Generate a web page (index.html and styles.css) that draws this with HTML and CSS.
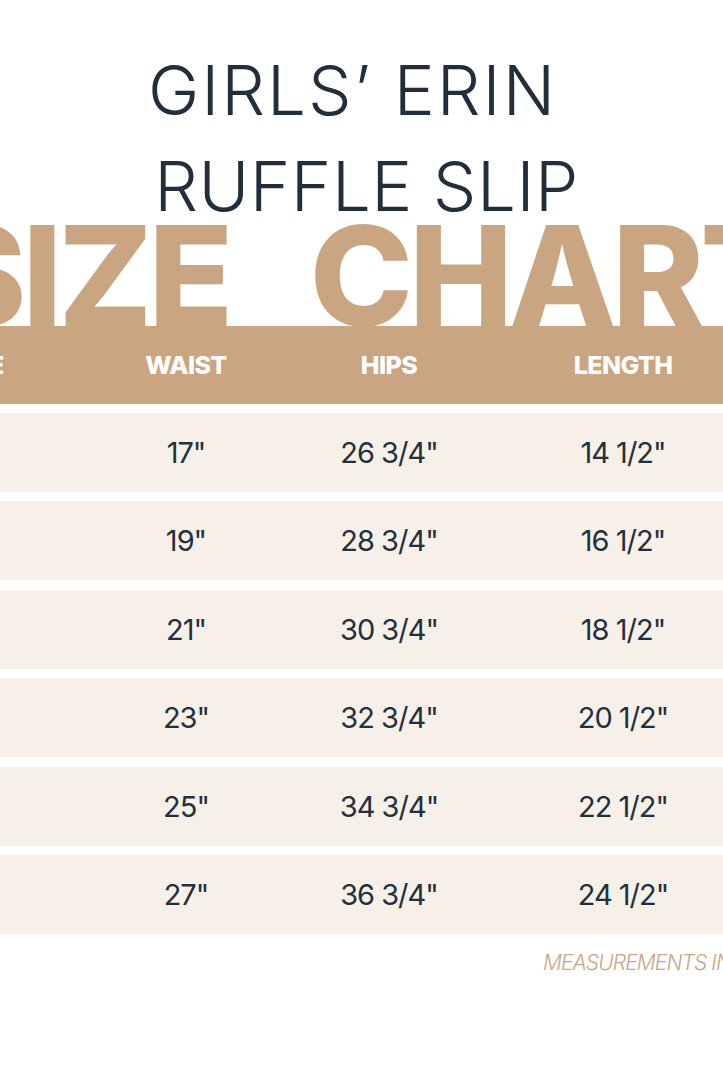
FILE: index.html
```html
<!DOCTYPE html>
<html lang="en">
<head>
<meta charset="utf-8">
<title>Girls' Erin Ruffle Slip – Size Chart</title>
<link rel="stylesheet" href="styles.css">
</head>
<body>
<main class="sheet">
  <h1 class="title">
    <span class="title-line title-line--first">GIRLS’ ERIN</span>
    <span class="title-line title-line--second">RUFFLE SLIP</span>
  </h1>
  <div class="banner">SIZE CHART</div>
  <div class="chart">
    <div class="row head">
      <div class="cell">SIZE</div>
      <div class="cell">WAIST</div>
      <div class="cell">HIPS</div>
      <div class="cell">LENGTH</div>
    </div>
    <div class="body">
      <div class="row"><div class="cell">2</div><div class="cell">17"</div><div class="cell">26 3/4"</div><div class="cell">14 1/2"</div></div>
      <div class="row"><div class="cell">4</div><div class="cell">19"</div><div class="cell">28 3/4"</div><div class="cell">16 1/2"</div></div>
      <div class="row"><div class="cell">6</div><div class="cell">21"</div><div class="cell">30 3/4"</div><div class="cell">18 1/2"</div></div>
      <div class="row"><div class="cell">8</div><div class="cell">23"</div><div class="cell">32 3/4"</div><div class="cell">20 1/2"</div></div>
      <div class="row"><div class="cell">10</div><div class="cell">25"</div><div class="cell">34 3/4"</div><div class="cell">22 1/2"</div></div>
      <div class="row"><div class="cell">12</div><div class="cell">27"</div><div class="cell">36 3/4"</div><div class="cell">24 1/2"</div></div>
    </div>
  </div>
  <p class="note">MEASUREMENTS IN INCHES</p>
</main>
</body>
</html>
```

FILE: styles.css
```css
html, body {
  margin: 0;
  padding: 0;
  background: #ffffff;
}

body {
  width: 723px;
  height: 1080px;
  overflow: hidden;
  font-family: Inter, "Noto Sans", sans-serif;
}

.sheet {
  width: 723px;
  overflow: hidden;
}

.title {
  margin: 0;
  padding-top: 42px;
  display: flex;
  flex-direction: column;
  align-items: center;
  font-weight: 300;
  font-size: 69px;
  line-height: 96px;
  color: #222e3c;
}

.title-line {
  display: block;
  white-space: nowrap;
}

.title-line--first {
  letter-spacing: 2px;
  transform: translateX(-9px);
}

.title-line--second {
  letter-spacing: 0.5px;
  transform: translateX(5px);
}

.banner {
  margin-top: -11px;
  padding-left: 2px;
  height: 103px;
  display: flex;
  justify-content: center;
  font-weight: 800;
  font-size: 139px;
  line-height: 106px;
  letter-spacing: -4px;
  word-spacing: 54px;
  color: #caa582;
  white-space: nowrap;
}

.chart {
  width: 723px;
  overflow: hidden;
}

.row {
  display: grid;
  grid-template-columns: 120px 298px 108px 360px;
  width: 886px;
  margin-left: -83px;
  align-items: center;
  justify-items: center;
  white-space: nowrap;
}

.head {
  height: 78px;
  background: #caa582;
  color: #ffffff;
  font-weight: 800;
  font-size: 25px;
  letter-spacing: -0.6px;
}

.body {
  display: flex;
  flex-direction: column;
  gap: 9.4px;
  padding-top: 9px;
}

.body .row {
  height: 79px;
  background: #f7f0e8;
  color: #232f3d;
  font-weight: 400;
  font-size: 29px;
  letter-spacing: -1px;
}

.note {
  margin: 0;
  padding: 16px 0 0 543px;
  white-space: nowrap;
  font-style: italic;
  font-weight: 300;
  font-size: 21px;
  letter-spacing: -0.9px;
  color: #caa582;
}
```
